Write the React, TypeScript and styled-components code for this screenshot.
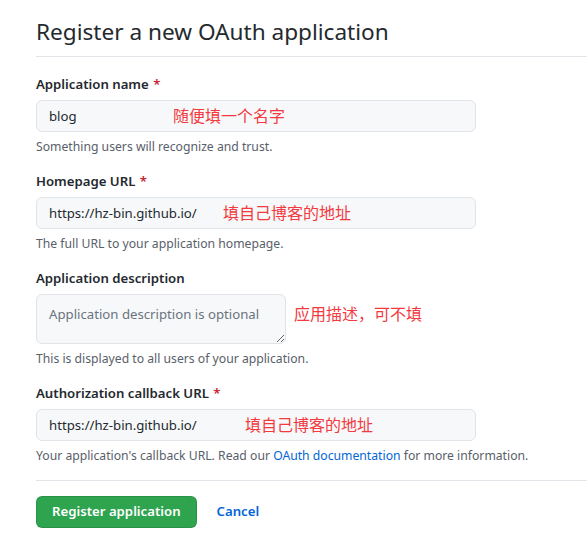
import React from 'react';
import styled, { createGlobalStyle } from 'styled-components';

const GlobalStyle = createGlobalStyle`
  html, body {
    margin: 0;
    padding: 0;
    background: #ffffff;
  }
  body {
    font-family: "Noto Sans", "Liberation Sans", "Noto Sans CJK SC", sans-serif;
    color: #24292e;
    font-size: 13.2px;
    line-height: 1.5;
  }
  * {
    box-sizing: border-box;
  }
`;

const Page = styled.div`
  padding: 17px 0 0 36px;
  width: 587px;
  overflow: hidden;
`;

const Header = styled.div`
  border-bottom: 1px solid #e1e4e8;
  padding-bottom: 9px;
  margin-bottom: 17px;
`;

const Title = styled.h2`
  margin: 0;
  font-size: 22.6px;
  font-weight: 400;
  line-height: 30px;
  color: #24292e;
`;

const FormGroup = styled.div`
  margin-bottom: 15px;
`;

const Label = styled.label`
  display: block;
  font-weight: 600;
  font-size: 13.2px;
  line-height: 21px;
  margin-bottom: 5px;
  color: #24292e;
`;

const Required = styled.span`
  color: #cb2431;
  margin-left: 1px;
`;

const FieldRow = styled.div<{ $top?: boolean }>`
  position: relative;
  display: flex;
  align-items: ${p => (p.$top ? 'flex-start' : 'center')};
  gap: 8px;
`;

const Input = styled.input`
  width: 440px;
  height: 32px;
  padding: 5px 12px;
  font: inherit;
  font-size: 13.2px;
  color: #24292e;
  background: #f6f8fa;
  border: 1px solid #e1e4e8;
  border-radius: 6px;
  outline: none;
`;

const TextArea = styled.textarea`
  width: 250px;
  height: 50px;
  padding: 9px 12px 6px;
  font: inherit;
  font-size: 13.2px;
  line-height: 20px;
  color: #24292e;
  background: #f6f8fa;
  border: 1px solid #e1e4e8;
  border-radius: 6px;
  outline: none;
  resize: both;

  &::placeholder {
    color: #6a737d;
    opacity: 1;
  }
`;

const Annotation = styled.span<{ $left?: number }>`
  font-family: "Noto Sans CJK SC", sans-serif;
  font-size: 16px;
  line-height: 22px;
  color: #f23a3f;
  white-space: nowrap;
  ${p =>
    p.$left !== undefined
      ? `position: absolute; left: ${p.$left}px; top: 4px;`
      : 'margin-top: 8px;'}
`;

const Note = styled.p`
  margin: 6px 0 0;
  font-size: 12.2px;
  line-height: 18px;
  color: #586069;
`;

const Link = styled.a`
  color: #0366d6;
  text-decoration: none;
`;

const Divider = styled.hr`
  border: 0;
  border-top: 1px solid #e1e4e8;
  margin: 12px 0 15px;
`;

const Actions = styled.div`
  display: flex;
  align-items: center;
  gap: 20px;
`;

const PrimaryButton = styled.button`
  height: 32px;
  padding: 0 15px;
  font: inherit;
  font-size: 13.2px;
  font-weight: 600;
  color: #ffffff;
  background: #2ea44f;
  border: 1px solid rgba(27, 31, 35, 0.15);
  border-radius: 6px;
  cursor: pointer;
`;

const CancelLink = styled.a`
  font-size: 13.2px;
  font-weight: 600;
  color: #0366d6;
  text-decoration: none;
`;

type Field = {
  label: string;
  required?: boolean;
  value: string;
  note: React.ReactNode;
  hint: string;
  hintLeft: number;
};

const fields: Field[] = [
  {
    label: 'Application name',
    required: true,
    value: 'blog',
    note: 'Something users will recognize and trust.',
    hint: '随便填一个名字',
    hintLeft: 137,
  },
  {
    label: 'Homepage URL',
    required: true,
    value: 'https://hz-bin.github.io/',
    note: 'The full URL to your application homepage.',
    hint: '填自己博客的地址',
    hintLeft: 187,
  },
];

const TextField: React.FC<{ field: Field }> = ({ field }) => (
  <FormGroup>
    <Label>
      {field.label}
      {field.required && <Required> *</Required>}
    </Label>
    <FieldRow>
      <Input defaultValue={field.value} />
      <Annotation $left={field.hintLeft}>{field.hint}</Annotation>
    </FieldRow>
    <Note>{field.note}</Note>
  </FormGroup>
);

const App: React.FC = () => {
  return (
    <Page>
      <GlobalStyle />
      <Header>
        <Title>Register a new OAuth application</Title>
      </Header>

      {fields.map(f => (
        <TextField key={f.label} field={f} />
      ))}

      <FormGroup>
        <Label>Application description</Label>
        <FieldRow $top>
          <TextArea placeholder="Application description is optional" />
          <Annotation>应用描述，可不填</Annotation>
        </FieldRow>
        <Note>This is displayed to all users of your application.</Note>
      </FormGroup>

      <TextField
        field={{
          label: 'Authorization callback URL',
          required: true,
          value: 'https://hz-bin.github.io/',
          note: (
            <>
              Your application's callback URL. Read our{' '}
              <Link href="#">OAuth documentation</Link> for more information.
            </>
          ),
          hint: '填自己博客的地址',
          hintLeft: 209,
        }}
      />

      <Divider />

      <Actions>
        <PrimaryButton>Register application</PrimaryButton>
        <CancelLink href="#">Cancel</CancelLink>
      </Actions>
    </Page>
  );
};

export default App;
